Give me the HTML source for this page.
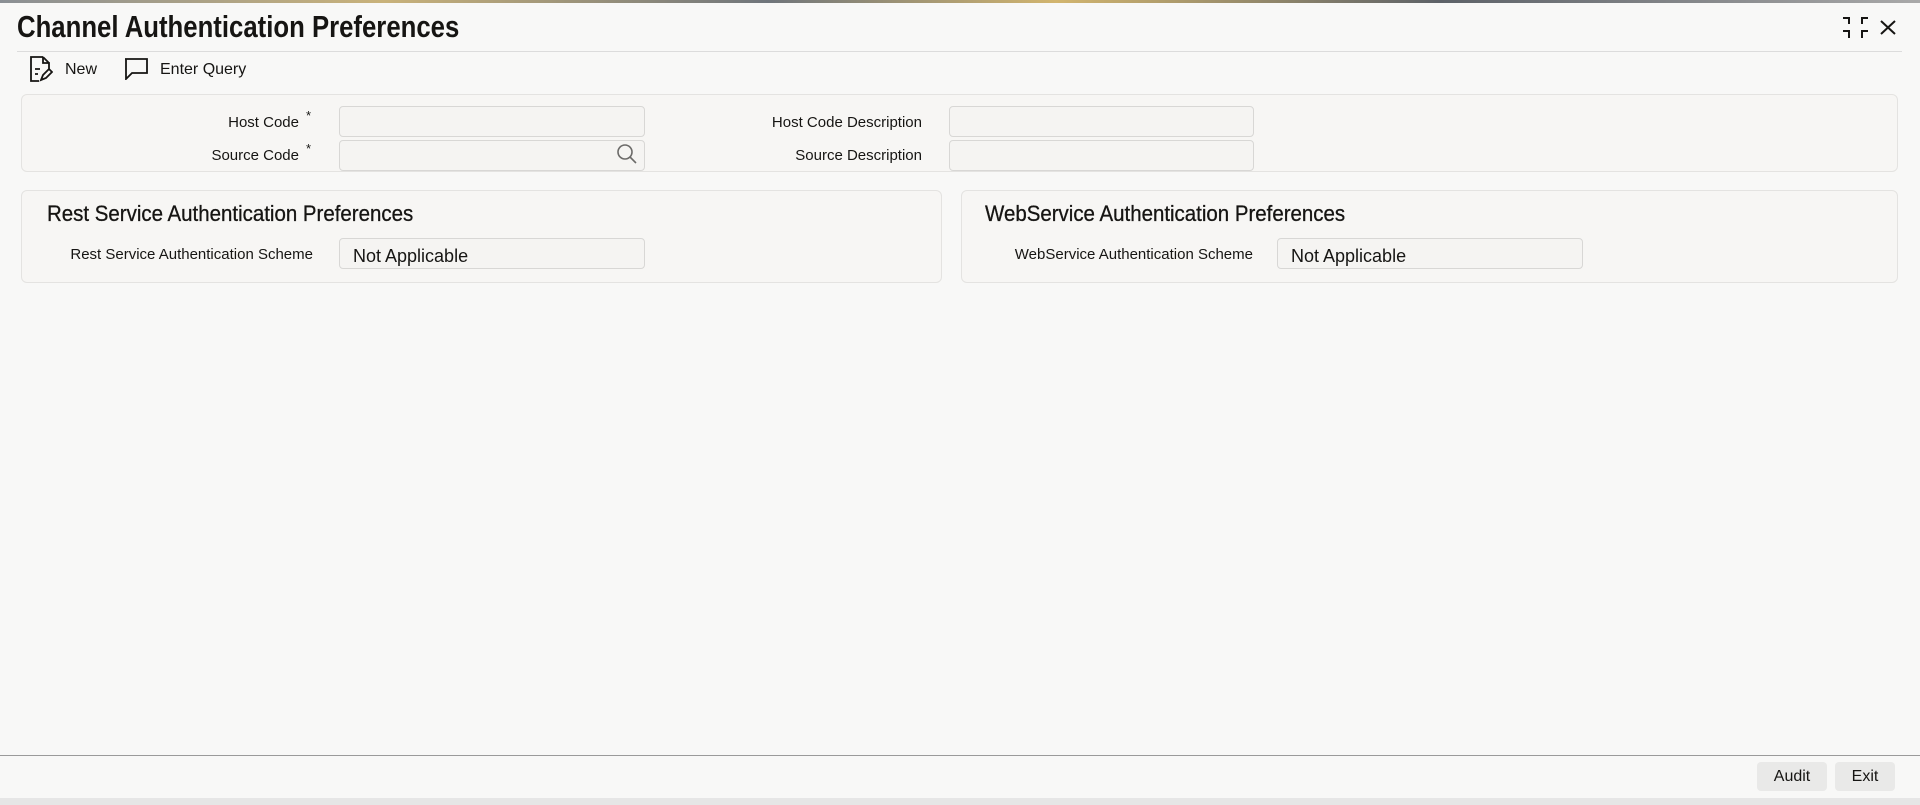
<!DOCTYPE html>
<html><head><meta charset="utf-8"><style>
*{box-sizing:border-box;margin:0;padding:0}
body{width:1920px;height:805px;overflow:hidden;background:#f8f8f7;font-family:"Liberation Sans",sans-serif;color:#161513;position:relative}
.a{position:absolute;white-space:nowrap}
.topstrip{left:0;top:0;width:1920px;height:3px;background:linear-gradient(90deg,#8a8f94,#c9b27a 20%,#6f757b 40%,#d2b56e 55%,#5d6268 75%,#a9a9a9)}
.title{left:17px;top:9px;font-size:31px;font-weight:bold;transform:scaleX(.83);transform-origin:left}
.sep{left:17px;top:51px;width:1885px;height:1px;background:#dcdcdc}
.tb{font-size:16px;top:61px}
.panel{background:#f7f6f4;border:1px solid #e4e3e1;border-radius:6px}
.lbl{font-size:15px;text-align:right}
.inp{background:#f5f4f2;border:1px solid #d8d7d5;border-radius:4px;height:31px}
.h{font-size:22px;transform:scaleX(.93);transform-origin:left;-webkit-text-stroke:.3px #161513}
.val{font-size:18px;padding:7px 0 0 13px}
.btn{background:#e9e9e8;border-radius:4px;font-size:16px;text-align:center;line-height:29px;height:29px}
.star{font-size:13px}
</style></head><body>
<div class="a topstrip"></div>
<div class="a title">Channel Authentication Preferences</div>
<svg class="a" style="left:1842px;top:15px" width="27" height="24" viewBox="0 0 27 24" fill="none" stroke="#161513" stroke-width="2"><path d="M1 3h6v6M20 9V3h6M1 16h6v7M20 23v-7h6"/></svg>
<svg class="a" style="left:1880px;top:20px" width="16" height="15" viewBox="0 0 16 15" stroke="#161513" stroke-width="2"><path d="M1 1l14 13M15 1L1 14"/></svg>
<div class="a sep"></div>
<svg class="a" style="left:29px;top:56px" width="24" height="26" viewBox="0 0 24 26" fill="none" stroke="#161513" stroke-width="1.8"><path d="M14 1H2v24h8M14 1v6h6v6M14 1l6 6M6 13h5M6 18h3M12 24l2-5 6-6 3 3-6 6z"/></svg>
<div class="a tb" style="left:65px">New</div>
<svg class="a" style="left:124px;top:58px" width="24" height="22" viewBox="0 0 24 22" fill="none" stroke="#161513" stroke-width="1.8"><path d="M1 1h22v14H8l-6 6V1z"/></svg>
<div class="a tb" style="left:160px">Enter Query</div>

<div class="a panel" style="left:21px;top:94px;width:1877px;height:78px"></div>
<div class="a lbl" style="left:150px;top:114px;width:149px">Host Code</div>
<div class="a star" style="left:306px;top:108px">*</div>
<div class="a inp" style="left:339px;top:106px;width:306px"></div>
<div class="a lbl" style="left:150px;top:147px;width:149px">Source Code</div>
<div class="a star" style="left:306px;top:141px">*</div>
<div class="a inp" style="left:339px;top:140px;width:306px"></div>
<svg class="a" style="left:616px;top:143px" width="22" height="22" viewBox="0 0 22 22" fill="none" stroke="#6b6a68" stroke-width="1.6"><circle cx="9" cy="9" r="7"/><path d="M14 14l6 6"/></svg>
<div class="a lbl" style="left:700px;top:114px;width:222px">Host Code Description</div>
<div class="a inp" style="left:949px;top:106px;width:305px"></div>
<div class="a lbl" style="left:700px;top:147px;width:222px">Source Description</div>
<div class="a inp" style="left:949px;top:140px;width:305px"></div>

<div class="a panel" style="left:21px;top:190px;width:921px;height:93px"></div>
<div class="a h" style="left:47px;top:201px">Rest Service Authentication Preferences</div>
<div class="a lbl" style="left:40px;top:246px;width:273px">Rest Service Authentication Scheme</div>
<div class="a inp val" style="left:339px;top:238px;width:306px">Not Applicable</div>

<div class="a panel" style="left:961px;top:190px;width:937px;height:93px"></div>
<div class="a h" style="left:985px;top:201px">WebService Authentication Preferences</div>
<div class="a lbl" style="left:980px;top:246px;width:273px">WebService Authentication Scheme</div>
<div class="a inp val" style="left:1277px;top:238px;width:306px">Not Applicable</div>

<div class="a" style="left:0;top:755px;width:1920px;height:1px;background:#9a9a9a"></div>
<div class="a btn" style="left:1757px;top:762px;width:70px">Audit</div>
<div class="a btn" style="left:1835px;top:762px;width:60px">Exit</div>
<div class="a" style="left:0;top:798px;width:1920px;height:7px;background:#e6e6e6"></div>
</body></html>
